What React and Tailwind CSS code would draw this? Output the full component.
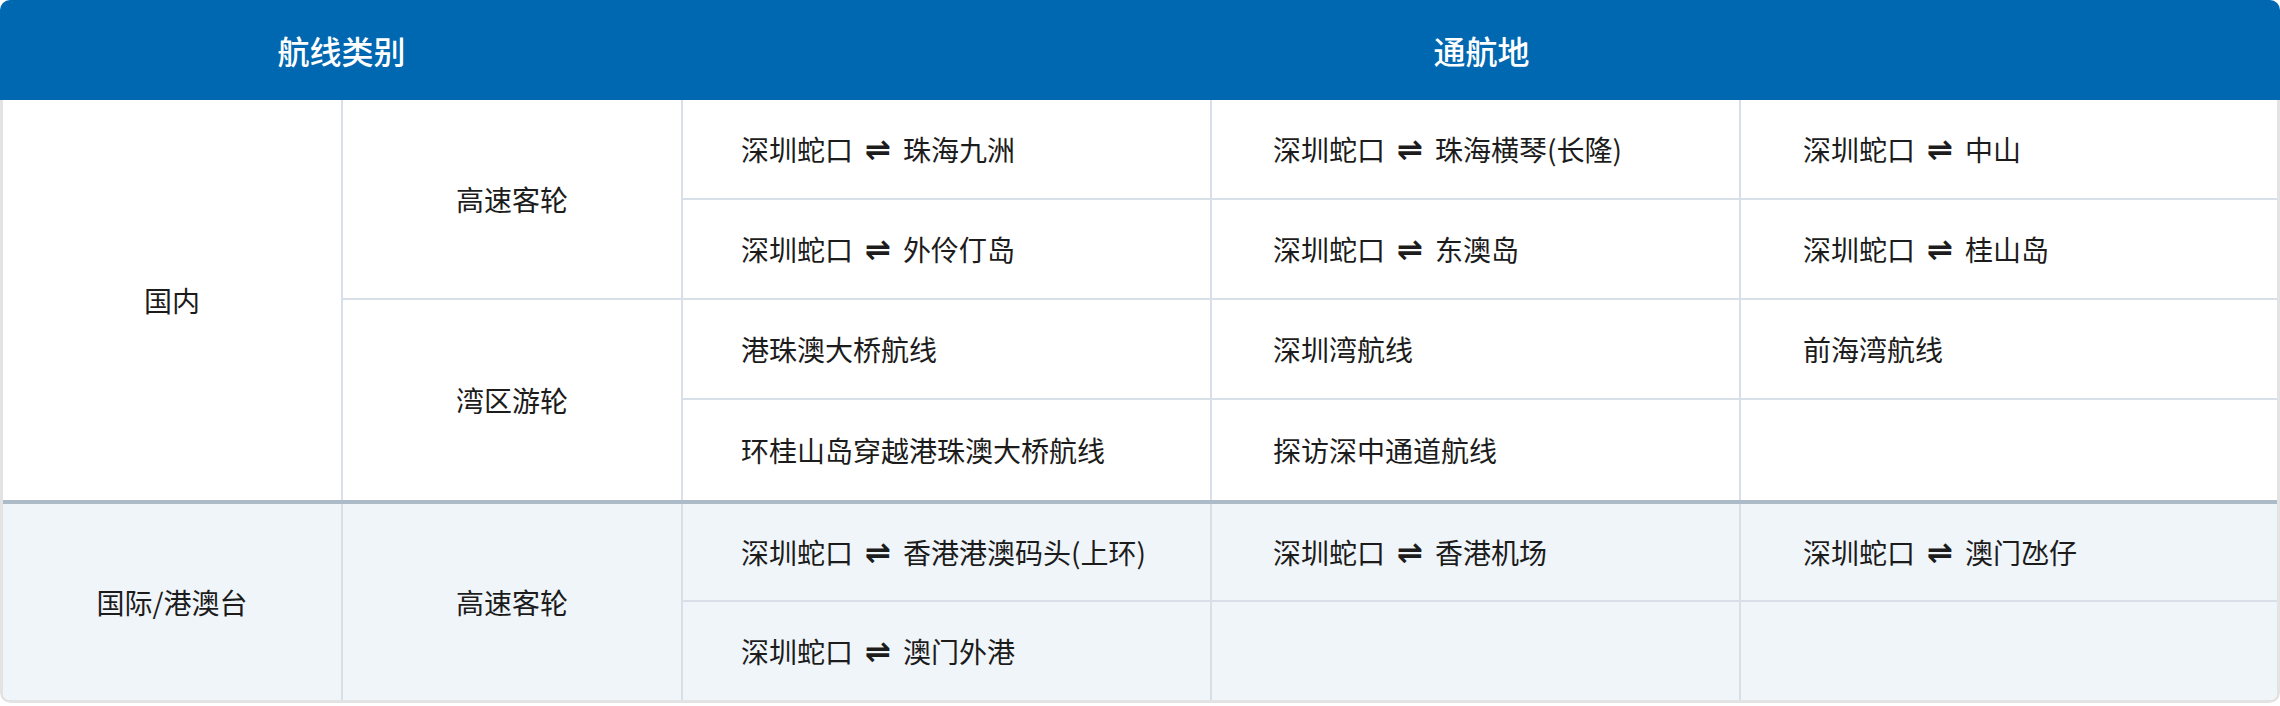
const domestic = [
  {
    type: "高速客轮",
    rows: [
      [["深圳蛇口", "珠海九洲"], ["深圳蛇口", "珠海横琴(长隆)"], ["深圳蛇口", "中山"]],
      [["深圳蛇口", "外伶仃岛"], ["深圳蛇口", "东澳岛"], ["深圳蛇口", "桂山岛"]],
    ],
  },
  {
    type: "湾区游轮",
    rows: [
      ["港珠澳大桥航线", "深圳湾航线", "前海湾航线"],
      ["环桂山岛穿越港珠澳大桥航线", "探访深中通道航线", ""],
    ],
  },
];

const international = {
  type: "高速客轮",
  rows: [
    [["深圳蛇口", "香港港澳码头(上环)"], ["深圳蛇口", "香港机场"], ["深圳蛇口", "澳门氹仔"]],
    [["深圳蛇口", "澳门外港"], "", ""],
  ],
};

const padding = ["pl-[58px]", "pl-[61px]", "pl-[62px]"];

function RouteCell({ text, col, bottom }) {
  return (
    <div
      className={`flex items-center ${padding[col]} border-[#d9dfe8] ${col === 2 ? "" : "border-r-2"} ${
        bottom ? "border-b-2" : ""
      }`}
    >
      {Array.isArray(text) ? (
        <>
          <span>{text[0]}</span>
          <span className="mx-[12px] font-['DejaVu_Sans',sans-serif] font-bold text-[31px] leading-none">
            ⇌
          </span>
          <span>{text[1]}</span>
        </>
      ) : (
        text
      )}
    </div>
  );
}

function Section({ groups, label }) {
  const total = groups.reduce((n, g) => n + g.rows.length, 0);
  return (
    <>
      <div
        className={`flex items-center justify-center border-r-2 border-[#d9dfe8] ${
          total === 4 ? "row-span-4" : "row-span-2"
        }`}
      >
        {label}
      </div>
      {groups.map((group, gi) => {
        const lastGroup = gi === groups.length - 1;
        return group.rows.map((row, ri) => (
          <div key={`${gi}-${ri}`} className="contents">
            {ri === 0 && (
              <div
                className={`flex items-center justify-center border-r-2 border-[#d9dfe8] row-span-2 ${
                  lastGroup ? "" : "border-b-2"
                }`}
              >
                {group.type}
              </div>
            )}
            {row.map((text, ci) => (
              <RouteCell
                key={ci}
                text={text}
                col={ci}
                bottom={!(lastGroup && ri === group.rows.length - 1)}
              />
            ))}
          </div>
        ));
      })}
    </>
  );
}

export default function App() {
  return (
    <div className="w-[2280px] h-[706px] bg-white font-['Noto_Sans_CJK_SC',sans-serif] text-[28px] text-[#1c1c1c]">
      <div className="rounded-[10px] overflow-hidden">
        <div className="flex h-[100px] bg-[#0067b1] text-white text-[32px] font-medium">
          <div className="w-[683px] flex items-center justify-center">航线类别</div>
          <div className="flex-1 flex items-center justify-center">通航地</div>
        </div>

        <div className="border-x-[3px] border-b-[3px] border-[#e3e3e3] rounded-b-[10px] overflow-hidden">
          <div className="grid grid-cols-[340px_340px_529px_529px_1fr] grid-rows-[100px_100px_100px_100px] bg-white">
            <Section groups={domestic} label="国内" />
          </div>

          <div className="grid grid-cols-[340px_340px_529px_529px_1fr] grid-rows-[98px_98px] bg-[#f0f5fa] border-t-4 border-[#adbbc9]">
            <Section groups={[international]} label="国际/港澳台" />
          </div>
        </div>
      </div>
    </div>
  );
}
